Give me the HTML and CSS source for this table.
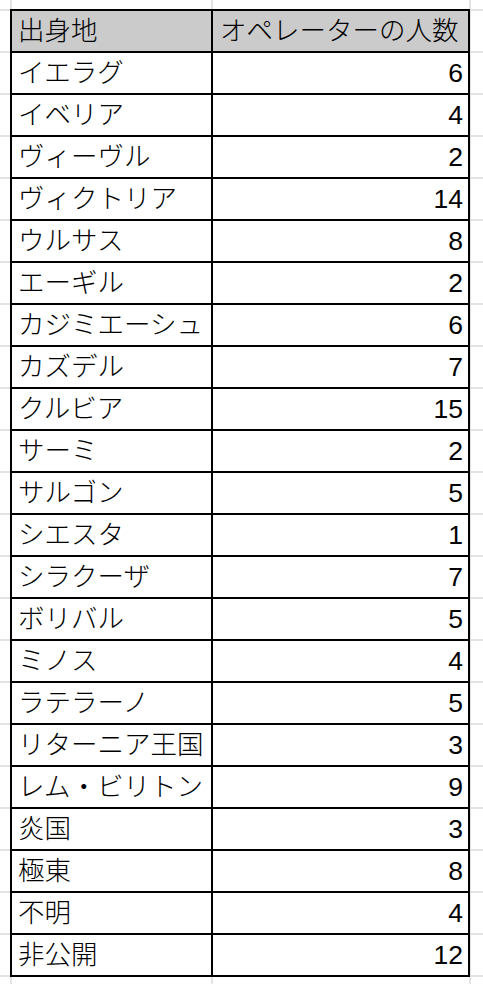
FILE: index.html
```html
<!DOCTYPE html>
<html lang="ja">
<head>
<meta charset="utf-8">
<title>出身地</title>
<link rel="stylesheet" href="styles.css">
</head>
<body>
<div class="sheet">
<table class="grid">
<thead>
<tr><th class="name">出身地</th><th class="head-count">オペレーターの人数</th></tr>
</thead>
<tbody>
<tr><td class="name">イエラグ</td><td class="num">6</td></tr>
<tr><td class="name">イベリア</td><td class="num">4</td></tr>
<tr><td class="name">ヴィーヴル</td><td class="num">2</td></tr>
<tr><td class="name">ヴィクトリア</td><td class="num">14</td></tr>
<tr><td class="name">ウルサス</td><td class="num">8</td></tr>
<tr><td class="name">エーギル</td><td class="num">2</td></tr>
<tr><td class="name">カジミエーシュ</td><td class="num">6</td></tr>
<tr><td class="name">カズデル</td><td class="num">7</td></tr>
<tr><td class="name">クルビア</td><td class="num">15</td></tr>
<tr><td class="name">サーミ</td><td class="num">2</td></tr>
<tr><td class="name">サルゴン</td><td class="num">5</td></tr>
<tr><td class="name">シエスタ</td><td class="num">1</td></tr>
<tr><td class="name">シラクーザ</td><td class="num">7</td></tr>
<tr><td class="name">ボリバル</td><td class="num">5</td></tr>
<tr><td class="name">ミノス</td><td class="num">4</td></tr>
<tr><td class="name">ラテラーノ</td><td class="num">5</td></tr>
<tr><td class="name">リターニア王国</td><td class="num">3</td></tr>
<tr><td class="name">レム・ビリトン</td><td class="num">9</td></tr>
<tr><td class="name">炎国</td><td class="num">3</td></tr>
<tr><td class="name">極東</td><td class="num">8</td></tr>
<tr><td class="name">不明</td><td class="num">4</td></tr>
<tr><td class="name">非公開</td><td class="num">12</td></tr>
</tbody>
</table>
</div>
</body>
</html>
```
FILE: styles.css
```css
html, body {
  margin: 0;
  padding: 0;
}

body {
  width: 483px;
  height: 984px;
  overflow: hidden;
  background-color: #ffffff;
  background-image:
    linear-gradient(to right,
      transparent 10px, #e3e3e3 10px, #e3e3e3 12px, transparent 12px,
      transparent 211px, #e3e3e3 211px, #e3e3e3 213px, transparent 213px,
      transparent 469px, #e3e3e3 469px, #e3e3e3 471px, transparent 471px),
    linear-gradient(to bottom, #e3e3e3 0, #e3e3e3 2px, transparent 2px);
  background-size: 100% 100%, 100% 42px;
  background-position: 0 0, 0 9px;
  background-repeat: no-repeat, repeat-y;
  font-family: "Liberation Sans", "Noto Sans CJK JP", sans-serif;
  color: #000000;
}

.sheet {
  padding: 9px 0 0 10px;
}

.grid {
  border-collapse: separate;
  border-spacing: 0;
  border-left: 2px solid #000;
  border-top: 2px solid #000;
  background: #ffffff;
  table-layout: fixed;
  font-size: 26.5px;
  line-height: 1;
}

.grid th,
.grid td {
  height: 40px;
  padding: 0;
  border-right: 2px solid #000;
  border-bottom: 2px solid #000;
  vertical-align: middle;
  font-weight: 300;
  white-space: nowrap;
  overflow: hidden;
}

.grid thead th {
  background: #cbcbcb;
  text-align: left;
}

.grid .name {
  width: 193px;
  padding-left: 6px;
  text-align: left;
}

.grid .head-count {
  width: 248px;
  padding-left: 7px;
  text-align: left;
}

.grid .num {
  width: 250px;
  padding-right: 5px;
  text-align: right;
}
```
